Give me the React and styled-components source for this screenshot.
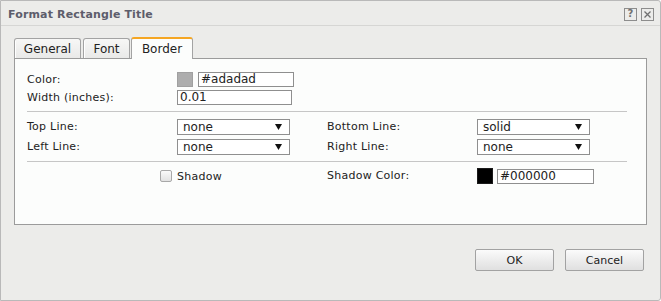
import React from 'react';
import styled, { createGlobalStyle } from 'styled-components';

const GlobalStyle = createGlobalStyle`
  html, body {
    margin: 0;
    padding: 0;
    background: #ffffff;
  }
  body {
    font-family: 'DejaVu Sans', Verdana, sans-serif;
    font-size: 11px;
    color: #222222;
  }
`;

const Dialog = styled.div`
  width: 661px;
  height: 301px;
  box-sizing: border-box;
  border: 1px solid #b9b9b9;
  border-radius: 0 3px 3px 0;
  background: #ececea;
  display: flex;
  flex-direction: column;
`;

const Header = styled.div`
  height: 24px;
  border-bottom: 1px solid #d6d6d4;
  display: flex;
  align-items: center;
  justify-content: space-between;
  padding: 0 6px 0 7px;
`;

const Title = styled.div`
  font-size: 11px;
  font-weight: bold;
  color: #5d5d6b;
  letter-spacing: 0.15px;
  padding-top: 2px;
`;

const HeaderTools = styled.div`
  display: flex;
  gap: 4px;
  padding-top: 2px;
`;

const ToolBox = styled.span`
  width: 11px;
  height: 11px;
  border: 1px solid #8d8d8d;
  display: flex;
  align-items: center;
  justify-content: center;
  font-size: 10px;
  font-weight: bold;
  color: #707070;
  line-height: 1;
`;

const TabBar = styled.div`
  display: flex;
  align-items: flex-end;
  gap: 1px;
  margin: 10px 13px 0;
  height: 22px;
`;

const Tab = styled.div`
  box-sizing: border-box;
  height: ${(p) => (p.$active ? '22px' : '20px')};
  width: ${(p) => p.$w}px;
  margin-left: ${(p) => (p.$first || p.$active ? '0' : '1px')};
  border: 1px solid #a3a3a3;
  border-bottom: none;
  border-top: ${(p) => (p.$active ? '2px solid #f5a623' : '1px solid #a3a3a3')};
  border-radius: 3px 3px 0 0;
  background: ${(p) =>
    p.$active ? '#fcfdfc' : 'linear-gradient(#f7f7f6, #e9e9e8)'};
  box-shadow: ${(p) => (p.$active ? 'none' : 'inset 1px 0 0 #ffffff')};
  display: flex;
  justify-content: center;
  padding-top: 3px;
  font-size: 12px;
  color: #222;
  position: relative;
  top: ${(p) => (p.$active ? '1px' : '0')};
  z-index: ${(p) => (p.$active ? 2 : 1)};
`;

const Panel = styled.div`
  box-sizing: border-box;
  margin: 0 13px;
  height: 167px;
  border: 1px solid #9b9b9b;
  background: #fcfdfc;
  padding: 13px 19px 0 12px;
  letter-spacing: 0.25px;
`;

const Grid = styled.div`
  display: grid;
  grid-template-columns: 150px 150px 150px 150px;
  row-gap: ${(p) => p.$gap}px;
  align-items: center;
`;

const Label = styled.div`
  line-height: ${(p) => p.$h || 15}px;
`;

const Inline = styled.div`
  display: flex;
  align-items: center;
  gap: ${(p) => p.$gap || 5}px;
  grid-column: ${(p) => p.$span || 'auto'};
`;

const Swatch = styled.span`
  box-sizing: border-box;
  width: 16px;
  height: ${(p) => p.$h || 15}px;
  background: ${(p) => p.$color};
  border: 1px solid ${(p) => (p.$color === '#000000' ? '#1a1a1a' : '#a0a0a0')};
`;

const TextBox = styled.div`
  box-sizing: border-box;
  width: ${(p) => p.$w}px;
  height: 15px;
  border: 1px solid #8f8f8f;
  background: #ffffff;
  padding: 0 2px;
  line-height: 13px;
  font-size: 12px;
  letter-spacing: 0;
  color: #222;
`;

const Select = styled.div`
  box-sizing: border-box;
  width: 113px;
  height: 16px;
  border: 1px solid #8f8f8f;
  background: #ffffff;
  display: flex;
  align-items: center;
  justify-content: space-between;
  padding: 0 7px 0 5px;
  font-size: 12px;
  letter-spacing: 0;
  color: #222;
`;

const Separator = styled.div`
  height: 1px;
  background: #c6c6c6;
  margin: ${(p) => p.$m};
`;

const CheckWrap = styled.label`
  display: flex;
  align-items: center;
  gap: 5px;
  margin-left: -17px;
  line-height: 15px;
`;

const CheckBox = styled.span`
  box-sizing: border-box;
  width: 12px;
  height: 12px;
  border: 1px solid #a8a8a8;
  border-radius: 2px;
  background: linear-gradient(#fafafa, #e2e2e2);
`;

const Footer = styled.div`
  display: flex;
  justify-content: flex-end;
  gap: 11px;
  padding: 24px 16px 0 0;
`;

const Button = styled.button`
  box-sizing: border-box;
  width: 79px;
  height: 22px;
  border: 1px solid #a2a2a2;
  border-radius: 2px;
  background: linear-gradient(#fbfbfb 0%, #ededed 50%, #e0e0e0 100%);
  font-family: 'DejaVu Sans', Tahoma, sans-serif;
  font-size: 11px;
  color: #222;
  padding: 0;
`;

function Arrow() {
  return (
    <svg width="7" height="6" viewBox="0 0 7 6">
      <path d="M0 0 H7 L3.5 6 Z" fill="#111" />
    </svg>
  );
}

function Dropdown({ value }) {
  return (
    <Select>
      <span>{value}</span>
      <Arrow />
    </Select>
  );
}

export default function App() {
  return (
    <>
      <GlobalStyle />
      <Dialog>
        <Header>
          <Title>Format Rectangle Title</Title>
          <HeaderTools>
            <ToolBox>?</ToolBox>
            <ToolBox>
              <svg width="9" height="9" viewBox="0 0 9 9">
                <path d="M1.5 1.5 L7.5 7.5 M7.5 1.5 L1.5 7.5" stroke="#707070" strokeWidth="1.3" />
              </svg>
            </ToolBox>
          </HeaderTools>
        </Header>

        <TabBar>
          <Tab $w={67} $first>General</Tab>
          <Tab $w={47}>Font</Tab>
          <Tab $w={62} $active>Border</Tab>
        </TabBar>

        <Panel>
          <Grid $gap={3}>
            <Label>Color:</Label>
            <Inline $span="2 / span 3">
              <Swatch $color="#adadad" />
              <TextBox $w={96}>#adadad</TextBox>
            </Inline>
            <Label>Width (inches):</Label>
            <Inline $span="2 / span 3">
              <TextBox $w={115}>0.01</TextBox>
            </Inline>
          </Grid>

          <Separator $m="6px 0 7px" />

          <Grid $gap={4}>
            <Label $h={16}>Top Line:</Label>
            <Dropdown value="none" />
            <Label $h={16}>Bottom Line:</Label>
            <Dropdown value="solid" />
            <Label $h={16}>Left Line:</Label>
            <Dropdown value="none" />
            <Label $h={16}>Right Line:</Label>
            <Dropdown value="none" />
          </Grid>

          <Separator $m="6px 0 6px" />

          <Grid $gap={0}>
            <div />
            <CheckWrap>
              <CheckBox />
              Shadow
            </CheckWrap>
            <Label $h={16}>Shadow Color:</Label>
            <Inline $gap={4}>
              <Swatch $color="#000000" $h={16} />
              <TextBox $w={97}>#000000</TextBox>
            </Inline>
          </Grid>
        </Panel>

        <Footer>
          <Button>OK</Button>
          <Button>Cancel</Button>
        </Footer>
      </Dialog>
    </>
  );
}
